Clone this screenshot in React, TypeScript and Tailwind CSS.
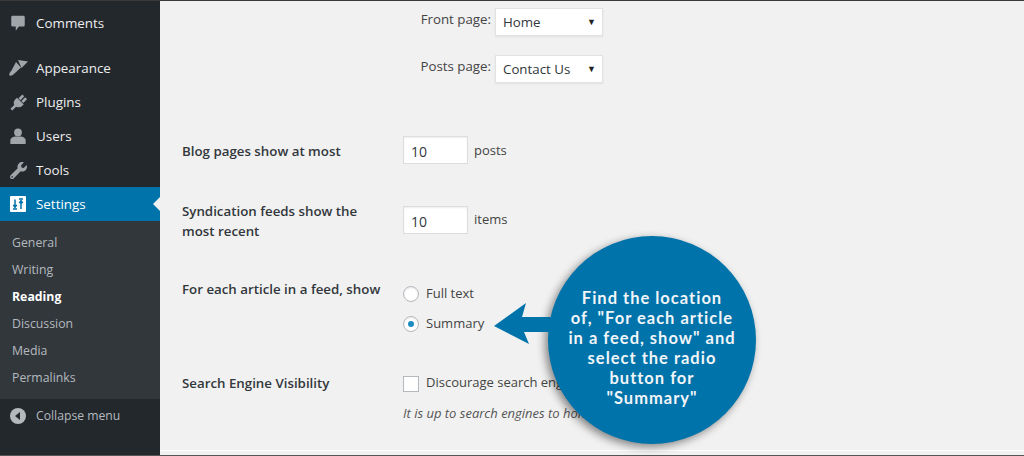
import { FaWrench } from 'react-icons/fa'
import type { ReactNode } from 'react'

function CommentIcon() {
  return (
    <svg viewBox="0 0 20 20" className="h-[18px] w-[18px]" fill="currentColor">
      <path d="M4 2h12a1.5 1.5 0 0 1 1.5 1.500v9a1.500 1.500 0 0 1-1.500 1.500h-5l-3.500 4.500v-4.500H4a1.500 1.500 0 0 1-1.500-1.500v-9A1.500 1.500 0 0 1 4 2z" />
    </svg>
  )
}

function BrushIcon() {
  return (
    <svg viewBox="0 0 20 20" className="h-[20px] w-[20px]" fill="currentColor">
      <path d="M10 2l10 1.500-6.500 6.500z" />
      <path d="M8 4l5 5.500-6 5.500q-3 3.500-5.500 2.500-1-2 2-5z" />
    </svg>
  )
}

function PlugIcon() {
  return (
    <svg viewBox="0 0 20 20" className="h-[19px] w-[19px]" fill="currentColor">
      <path d="M8.500 5l7 7q-4 4.500-8 2.500L3.500 18.500 1.500 16.500 5.500 12.500Q3.500 8.500 8.500 5z" />
      <path d="M10 5.500 14 1.500 16 3.500 12 7.500zM13 8.500 17 4.500 19 6.500 15 10.500z" />
    </svg>
  )
}

function UserIcon() {
  return (
    <svg viewBox="0 0 20 20" className="h-[18px] w-[18px]" fill="currentColor">
      <circle cx="10" cy="6" r="4.300" />
      <path d="M1.500 19v-4q0-3.500 5-4.500h7q5 1 5 4.500v4z" />
    </svg>
  )
}

function SettingsIcon() {
  return (
    <svg viewBox="0 0 16 16" className="h-[16px] w-[16px]">
      <rect width="16" height="16" rx="1" fill="#fff" />
      <path d="M5 3.500v7M3.300 8.800 5 11.300l1.700-2.500M11 13V6M9.300 7.200 11 4.700l1.700 2.500" stroke="#0073aa" strokeWidth="1.500" fill="none" />
      <path d="M3 13h4M9 3h4" stroke="#0073aa" strokeWidth="1.400" />
    </svg>
  )
}

const mainMenu: { label: string; icon: ReactNode }[] = [
  { label: 'Appearance', icon: <BrushIcon /> },
  { label: 'Plugins', icon: <PlugIcon /> },
  { label: 'Users', icon: <UserIcon /> },
  { label: 'Tools', icon: <FaWrench className="h-[17px] w-[17px]" /> },
]

const subMenu = ['General', 'Writing', 'Reading', 'Discussion', 'Media', 'Permalinks']

function Sidebar() {
  return (
    <aside className="flex w-[160px] shrink-0 flex-col bg-[#23282d] text-[13.4px] text-[#eeeeee]">
      <div className="mt-[5px] flex h-[34px] items-center">
        <span className="flex w-[36px] justify-center text-[#a0a5aa]">
          <CommentIcon />
        </span>
        Comments
      </div>
      <div className="mt-[11px] flex flex-col">
        {mainMenu.map((item) => (
          <div key={item.label} className="flex h-[34px] items-center">
            <span className="flex w-[36px] justify-center text-[#a0a5aa]">{item.icon}</span>
            {item.label}
          </div>
        ))}
      </div>
      <div className="relative flex h-[34px] items-center bg-[#0073aa] text-white">
        <span className="flex w-[36px] justify-center">
          <SettingsIcon />
        </span>
        Settings
        <span className="absolute right-0 top-[10px] h-0 w-0 border-y-[7px] border-r-[7px] border-y-transparent border-r-[#f1f1f1]" />
      </div>
      <div className="flex flex-col bg-[#32373c] pt-[9px] pb-[7px] text-[12.3px] text-[#b4b9be]">
        {subMenu.map((name) => (
          <div
            key={name}
            className={name === 'Reading' ? 'flex h-[27px] items-center pl-[12px] font-bold text-white' : 'flex h-[27px] items-center pl-[12px]'}
          >
            {name}
          </div>
        ))}
      </div>
      <div className="flex h-[34px] items-center text-[12.2px] text-[#b4b9be]">
        <span className="flex w-[36px] justify-center">
          <span className="flex h-[16px] w-[16px] items-center justify-center rounded-full bg-[#b4b9be]">
            <span className="mr-[2px] h-0 w-0 border-y-[4px] border-r-[5px] border-y-transparent border-r-[#23282d]" />
          </span>
        </span>
        Collapse menu
      </div>
    </aside>
  )
}

function SelectBox({ value }: { value: string }) {
  return (
    <div className="flex h-[28px] w-[108px] items-center justify-between border border-[#e2e2e2] bg-white pl-[7px] pr-[6px] pt-[2px] text-[13.3px] text-[#32373c] shadow-[0_1px_2px_rgba(0,0,0,0.07)]">
      {value}
      <span className="pb-[3px] text-[9px] text-[#222]">▼</span>
    </div>
  )
}

function NumberBox({ value }: { value: string }) {
  return (
    <div className="flex h-[28px] w-[65px] items-center border border-[#dddddd] bg-white pl-[7px] pt-[2px] text-[14px] text-[#32373c] shadow-[inset_0_1px_2px_rgba(0,0,0,0.07)]">
      {value}
    </div>
  )
}

function Radio({ checked }: { checked?: boolean }) {
  return (
    <span className="flex h-[16px] w-[16px] items-center justify-center rounded-full border border-[#b4b9be] bg-white shadow-[inset_0_1px_2px_rgba(0,0,0,0.1)]">
      {checked && <span className="h-[6px] w-[6px] rounded-full bg-[#1e8cbe]" />}
    </span>
  )
}

function Callout() {
  return (
    <div className="absolute left-[494px] top-[235px] flex items-center">
      <svg width="70" height="46" viewBox="0 0 70 46" className="absolute left-0 top-[65px]">
        <path d="M0 25 32 2 28 16H70V31H30L35 43Z" fill="#0073aa" />
      </svg>
      <div
        className="ml-[54px] flex h-[208px] w-[208px] items-center justify-center rounded-full bg-[#0073aa] pt-[16px] text-center text-[16.5px] font-bold leading-[20px] tracking-[1px] whitespace-nowrap text-[#f1f5f8] shadow-[-3px_3px_8px_rgba(0,0,0,0.45)]"
        style={{ fontFamily: 'Lato, sans-serif' }}
      >
        <p>
          Find the location
          <br />
          of, "For each article
          <br />
          in a feed, show" and
          <br />
          select the radio
          <br />
          button for
          <br />
          "Summary"
        </p>
      </div>
    </div>
  )
}

export default function App() {
  return (
    <div
      className="relative flex h-[456px] w-[1024px] overflow-hidden border-y border-t-[#3a3a3a] border-b-[#555555] bg-[#f1f1f1] text-[#444444]"
      style={{ fontFamily: '"Open Sans", sans-serif' }}
    >
      <Sidebar />
      <main className="flex-1 text-[13px]">
        <div className="ml-[251px] mt-[7px] flex items-center gap-[4px]">
          <span className="w-[80px] whitespace-nowrap pb-[5px] text-right text-[13.3px]">Front page:</span>
          <SelectBox value="Home" />
        </div>
        <div className="ml-[251px] mt-[19px] flex items-center gap-[4px]">
          <span className="w-[80px] whitespace-nowrap pb-[5px] text-right text-[13.3px]">Posts page:</span>
          <SelectBox value="Contact Us" />
        </div>
        <div className="ml-[22px] mt-[53px] flex items-center">
          <span className="w-[221px] pt-[4px] text-[13.3px] font-semibold text-[#32373c]">Blog pages show at most</span>
          <NumberBox value="10" />
          <span className="ml-[6px] pt-[2px]">posts</span>
        </div>
        <div className="ml-[22px] mt-[36px] flex items-start">
          <span className="w-[221px] pt-[1px] text-[13.3px] font-semibold leading-[20px] text-[#32373c]">
            Syndication feeds show the
            <br />
            most recent
          </span>
          <div className="mt-[6px]">
            <NumberBox value="10" />
          </div>
          <span className="ml-[6px] mt-[10px]">items</span>
        </div>
        <div className="ml-[22px] mt-[37px] flex items-start">
          <span className="w-[221px] pt-[2px] text-[13.3px] font-semibold text-[#32373c]">For each article in a feed, show</span>
          <div className="flex flex-col gap-[10px] pt-[6px]">
            <label className="flex h-[20px] items-center gap-[7px]">
              <Radio /> Full text
            </label>
            <label className="flex h-[20px] items-center gap-[7px]">
              <Radio checked /> Summary
            </label>
          </div>
        </div>
        <div className="ml-[22px] mt-[40px] flex items-start">
          <span className="w-[221px] text-[13.3px] font-semibold text-[#32373c]">Search Engine Visibility</span>
          <div className="flex flex-col gap-[10px]">
            <label className="flex h-[20px] items-center gap-[7px]">
              <span className="h-[16px] w-[16px] border border-[#b4b9be] bg-white" />
              <span className="pb-[2px]">Discourage search engines from indexing this site</span>
            </label>
            <em className="text-[13px] text-[#555]">It is up to search engines to honor this request.</em>
          </div>
        </div>
        <div className="mt-[26px] h-px bg-white" />
      </main>
      <Callout />
    </div>
  )
}
